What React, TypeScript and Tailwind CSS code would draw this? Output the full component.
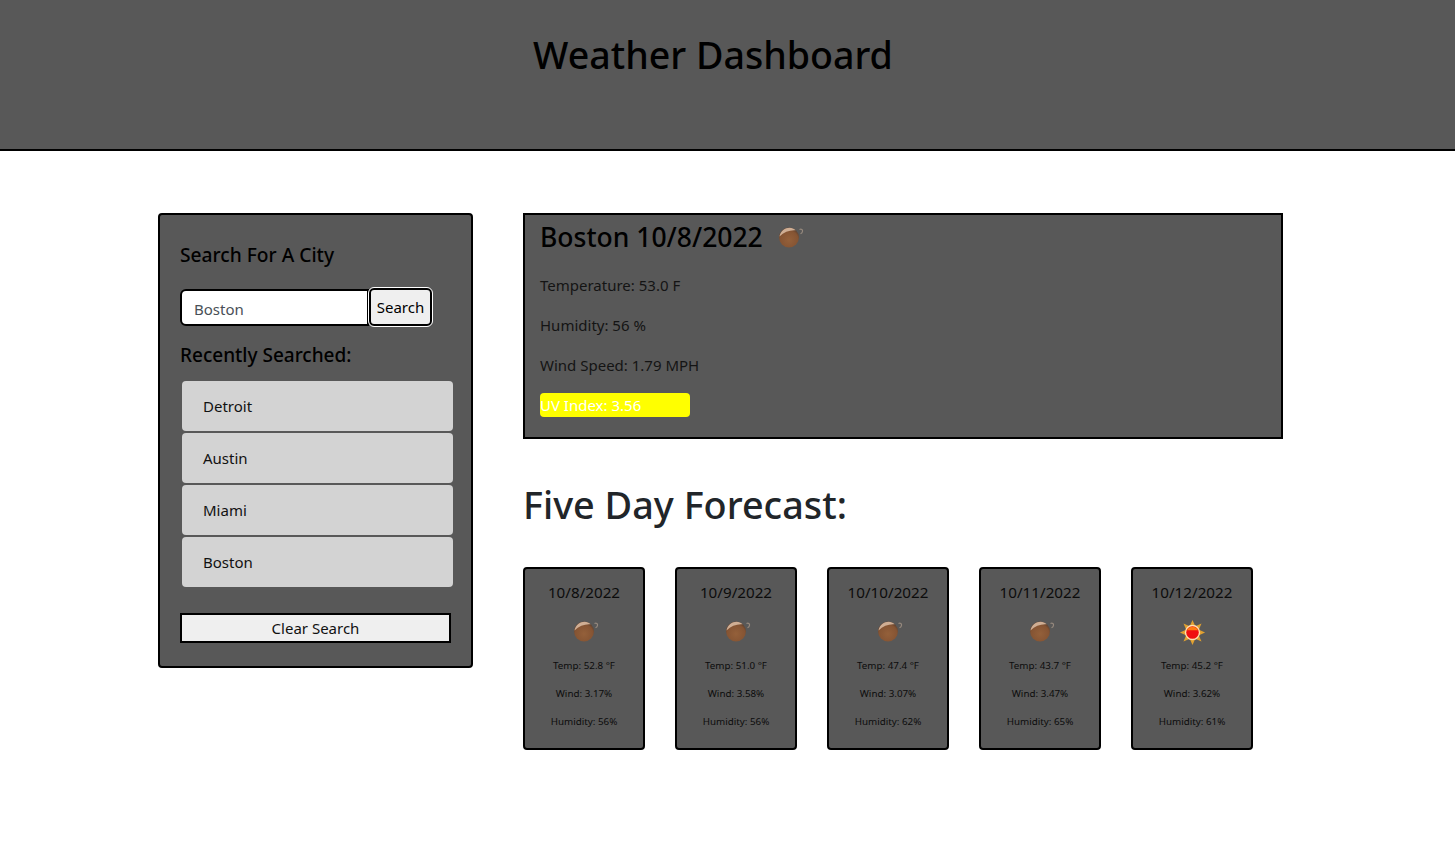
const recent = ['Detroit', 'Austin', 'Miami', 'Boston'];

const forecast = [
  { date: '10/8/2022', temp: '52.8', wind: '3.17', humidity: '56', icon: 'rain' },
  { date: '10/9/2022', temp: '51.0', wind: '3.58', humidity: '56', icon: 'rain' },
  { date: '10/10/2022', temp: '47.4', wind: '3.07', humidity: '62', icon: 'rain' },
  { date: '10/11/2022', temp: '43.7', wind: '3.47', humidity: '65', icon: 'rain' },
  { date: '10/12/2022', temp: '45.2', wind: '3.62', humidity: '61', icon: 'sun' },
];

function BallIcon({ id, className }: { id: string; className?: string }) {
  return (
    <svg viewBox="0 0 30 24" className={className}>
      <defs>
        <radialGradient id={id} cx="50%" cy="62%" r="58%">
          <stop offset="0%" stopColor="#94603a" />
          <stop offset="78%" stopColor="#855433" />
          <stop offset="100%" stopColor="#5f4230" />
        </radialGradient>
      </defs>
      <circle cx="12" cy="12.500" r="10" fill={`url(#${id})`} />
      <path d="M2.500 11.500C3.500 6 8 2.800 12.500 2.800c2.500 0 4.700.9 6.200 2.500C13 4.800 7 7 2.500 11.500Z" fill="#cfae94" />
      <path d="M22.500 4.500c1.800-1 3.400.2 3 2-.2 1.200-1 1.900-2 2.300" fill="none" stroke="#96897d" strokeWidth="1.200" />
    </svg>
  );
}

function SunIcon({ className }: { className?: string }) {
  return (
    <svg viewBox="0 0 30 30" className={className}>
      <path d="M15 1l3.500 8h-7ZM15 29l-3.500-8h7ZM1 15l8-3.500v7ZM29 15l-8 3.500v-7Z" fill="#e0a030" />
      <path d="M5 5l7 3-4 4ZM25 5l-3 7-4-4ZM5 25l3-7 4 4ZM25 25l-7-3 4-4Z" fill="#e0a030" />
      <circle cx="15" cy="15" r="8.500" fill="#ffe2ae" />
      <circle cx="15" cy="15" r="7" fill="#f01010" />
      <path d="M8.800 12.500a6.800 6.800 0 0 1 12.400 0Z" fill="#ff7a10" />
    </svg>
  );
}

export default function App() {
  return (
    <div className="min-h-[860px] bg-white text-[#212529] font-['Noto_Sans',sans-serif]">
      <header className="h-[151px] bg-[#585858] border-b-2 border-black flex justify-center pt-[25px] pr-[29px]">
        <h1 className="text-[37.6px] leading-[60px] font-medium text-black h-[60px]">Weather Dashboard</h1>
      </header>

      <main className="flex items-start pt-[62px] pl-[158px]">
        <aside className="w-[315px] h-[455px] bg-[#585858] border-2 border-black rounded-[4px] pt-[27px] pl-[20px] text-black">
          <h2 className="text-[19.2px] leading-[26px] font-medium">Search For A City</h2>
          <div className="flex mt-[21px] h-[38px] items-start">
            <input
              readOnly
              value="Boston"
              className="w-[189px] h-[37px] bg-white border-2 border-black rounded-l-[6px] pl-[12px] pt-[2px] text-[15px] text-[#495057] outline-none"
            />
            <button className="w-[63px] h-[38px] -mt-[1px] pt-[1px] bg-[#efefef] border-2 border-black rounded-[5px] outline outline-1 outline-white text-[15px] text-black">
              Search
            </button>
          </div>
          <h3 className="text-[19px] leading-[26px] font-medium mt-[15px]">Recently Searched:</h3>
          <ul className="flex flex-col gap-[2px] mt-[13px] ml-[2px] w-[271px]">
            {recent.map((city) => (
              <li key={city} className="h-[50px] bg-[#d3d3d3] rounded-[4px] pl-[21px] flex items-center text-[15px] text-[#111]">
                {city}
              </li>
            ))}
          </ul>
          <button className="block w-[271px] h-[30px] mt-[26px] bg-[#efefef] border-2 border-black text-[15px] leading-none text-[#111]">
            Clear Search
          </button>
        </aside>

        <section className="w-[760px] ml-[50px]">
          <div className="h-[226px] bg-[#585858] border-2 border-black pl-[15px] text-[#141414]">
            <div className="flex items-center h-[44px]">
              <h2 className="text-[26.500px] leading-[44px] font-medium text-black">Boston 10/8/2022</h2>
              <BallIcon id="ball-main" className="w-[30px] h-[24px] ml-[14px]" />
            </div>
            <div className="flex flex-col text-[15px] leading-[24px]">
              <p className="mt-[14px]">Temperature: 53.0 F</p>
              <p className="mt-[16px]">Humidity: 56 %</p>
              <p className="mt-[16px]">Wind Speed: 1.79 MPH</p>
              <p className="mt-[16px] w-[150px] h-[24px] bg-[#ffff00] rounded-[4px] text-white">UV Index: 3.56</p>
            </div>
          </div>

          <h2 className="text-[37.800px] leading-[48px] font-medium mt-[42px] text-[#212529]">Five Day Forecast:</h2>

          <div className="flex gap-[30px] mt-[38px]">
            {forecast.map((day, i) => (
              <div key={day.date} className="w-[122px] h-[183px] bg-[#585858] border-2 border-black rounded-[4px] flex flex-col items-center text-[#0c0c0c]">
                <div className="text-[15.200px] leading-[24px] mt-[11px]">{day.date}</div>
                <div className="h-[30px] mt-[12px] flex items-center justify-center">
                  {day.icon === 'sun' ? (
                    <SunIcon className="w-[27px] h-[27px] mt-[3px]" />
                  ) : (
                    <BallIcon id={`ball-${i}`} className="w-[30px] h-[24px] ml-[6px]" />
                  )}
                </div>
                <div className="text-[9.800px] leading-[14px] mt-[13px]">Temp: {day.temp} °F</div>
                <div className="text-[9.800px] leading-[14px] mt-[14px]">Wind: {day.wind}%</div>
                <div className="text-[9.800px] leading-[14px] mt-[14px]">Humidity: {day.humidity}%</div>
              </div>
            ))}
          </div>
        </section>
      </main>
    </div>
  );
}
